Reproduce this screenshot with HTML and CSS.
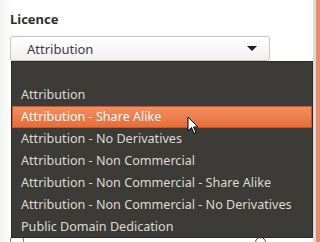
FILE: index.html
```html
<!DOCTYPE html>
<html lang="en">
<head>
	<meta charset="UTF-8">
	<title>Licence</title>
	<link rel="stylesheet" href="styles.css">
</head>
<body>
	<div class="window">
		<div class="main">
			<div class="label">Licence</div>
			<div class="combo">
				<span class="combo-text">Attribution</span>
				<span class="arrow"></span>
			</div>
			<div class="below">
				<span class="check"></span>
				<span class="radio"></span>
			</div>

			<ul class="menu">
				<li class="empty"></li>
				<li>Attribution</li>
				<li class="active">Attribution - Share Alike</li>
				<li>Attribution - No Derivatives</li>
				<li>Attribution - Non Commercial</li>
				<li>Attribution - Non Commercial - Share Alike</li>
				<li>Attribution - Non Commercial - No Derivatives</li>
				<li>Public Domain Dedication</li>
			</ul>

			<svg class="cursor" width="12" height="19" viewBox="0 0 12 19">
				<path d="M1 1 L1 15 L4.5 11.5 L7 17.5 L9 16.6 L6.6 11 L11 11 Z" fill="#fff" stroke="#000" stroke-width="1" stroke-linejoin="round"/>
			</svg>
		</div>
		<div class="edge-grey"></div>
		<div class="edge-orange"></div>
	</div>
</body>
</html>
```

FILE: styles.css
```css
body {
	margin: 0px;
	background-color: #ffffff;
	font-family: "Noto Sans", "DejaVu Sans", sans-serif;
	font-size: 13px;
	color: #3c3c3c;
}
.window {
	display: flex;
	height: 242px;
	overflow: hidden;
}
.main {
	position: relative;
	flex: 1;
	padding: 10px 0px 0px 10px;
	background: linear-gradient(to right, #f3f3f2 0px, #ffffff 12px);
}
.edge-grey {
	width: 3px;
	background-color: #dcdad7;
}
.edge-orange {
	width: 4px;
	background-color: #e98a6c;
}
.label {
	font-weight: bold;
	height: 26px;
	color: #2f2f2f;
}
.combo {
	display: flex;
	align-items: center;
	justify-content: space-between;
	height: 25px;
	padding: 0px 12px 0px 16px;
	box-sizing: border-box;
	width: 260px;
	border: 1px solid #c9c6c2;
	border-radius: 3px;
	background: linear-gradient(#ffffff, #f1f0ef);
}
.arrow {
	width: 0px;
	height: 0px;
	border-left: 5px solid transparent;
	border-right: 5px solid transparent;
	border-top: 5px solid #1e1e1e;
}
.below {
	display: flex;
	justify-content: space-between;
	width: 256px;
	margin-top: 176px;
}
.check {
	width: 12px;
	height: 12px;
	border: 1px solid #8d8a86;
	border-radius: 2px;
}
.radio {
	width: 9px;
	height: 9px;
	border: 1px solid #4a4a4a;
	border-radius: 50%;
}
.menu {
	position: absolute;
	left: 11px;
	top: 61px;
	width: 302px;
	margin: 0px;
	padding: 0px;
	list-style: none;
	background-color: #3c3b37;
	border: 1px solid #2b2a27;
	box-sizing: border-box;
	height: 177px;
	font-size: 12.6px;
}
.menu li {
	height: 22px;
	line-height: 22px;
	padding-left: 9px;
	color: #dfdbd2;
	white-space: nowrap;
}
.menu li.active {
	color: #ffffff;
	background: linear-gradient(#f39164, #e66b37);
	box-shadow: inset 0px 0px 0px 1px #c8562a;
}
.cursor {
	position: absolute;
	left: 187px;
	top: 116px;
}
```
